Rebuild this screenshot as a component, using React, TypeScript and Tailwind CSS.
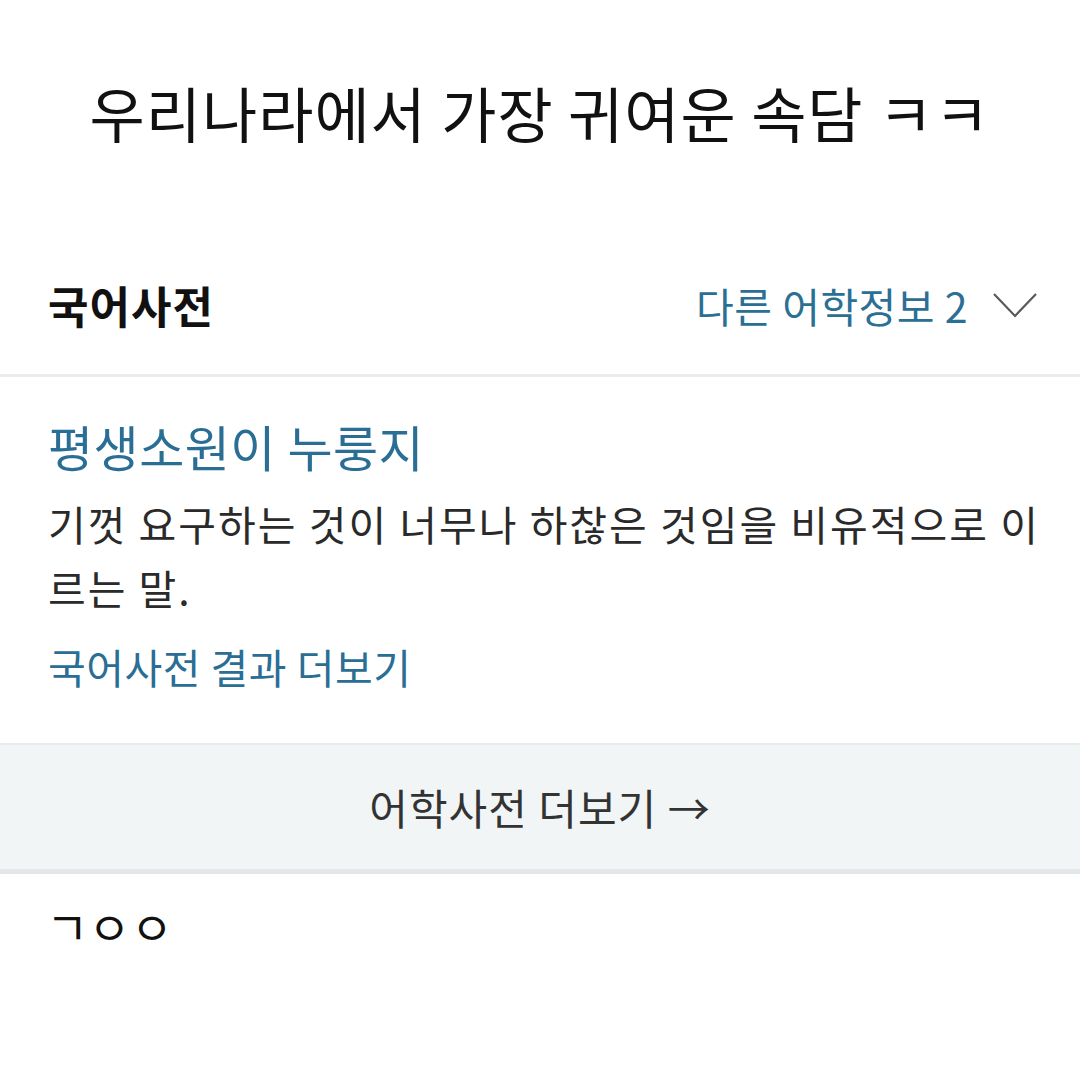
const font = "font-['Noto_Sans_CJK_KR','Noto_Sans',sans-serif]";

function Chevron() {
  return (
    <svg width="48" height="28" viewBox="0 0 48 28" fill="none" className="ml-[24px]">
      <polyline points="2,3 23,25 44,3" stroke="#5a5a5a" strokeWidth="2.2" strokeLinejoin="miter" />
    </svg>
  );
}

export default function App() {
  return (
    <div className={`w-[1080px] h-[1080px] bg-white overflow-hidden ${font}`}>
      <div className="h-[224px] flex items-center justify-center">
        <h1 className="text-[60px] leading-none text-[#111] tracking-[1px]">
          우리나라에서 가장 귀여운 속담 ㅋㅋ
        </h1>
      </div>

      <div className="h-[150px] flex items-center justify-between pl-[48px] pr-[40px] pt-[12px]">
        <div className="text-[44px] leading-none font-bold text-[#111] tracking-[1px]">국어사전</div>
        <div className="flex items-center">
          <span className="text-[41px] leading-none text-[#2b6f94] tracking-[0.5px]">다른 어학정보 2</span>
          <Chevron />
        </div>
      </div>
      <div className="h-[3px] bg-[#ececec]" />

      <div className="pl-[48px] pr-[40px] pt-[38px] pb-[47px]">
        <div className="text-[49px] leading-[62px] text-[#2a6e95] tracking-[0.5px]">평생소원이 누룽지</div>
        <p className="mt-[14px] text-[41px] leading-[64px] text-[#2a2a2a] tracking-[2px] break-all">
          기껏 요구하는 것이 너무나 하찮은 것임을 비유적으로 이르는 말.
        </p>
        <div className="mt-[17px] text-[41px] leading-[60px] text-[#2a6e95] tracking-[0.5px]">국어사전 결과 더보기</div>
      </div>

      <div className="h-[2px] bg-[#e9ecee]" />
      <div className="h-[124px] bg-[#f1f5f6] flex items-center justify-center">
        <span className="text-[42px] leading-none text-[#333] tracking-[1px]">어학사전 더보기 →</span>
      </div>
      <div className="h-[5px] bg-[#e3e7e9]" />

      <div className="pl-[46px] pt-[28px]">
        <span className="text-[46px] leading-none text-[#111]">ㄱㅇㅇ</span>
      </div>
    </div>
  );
}
